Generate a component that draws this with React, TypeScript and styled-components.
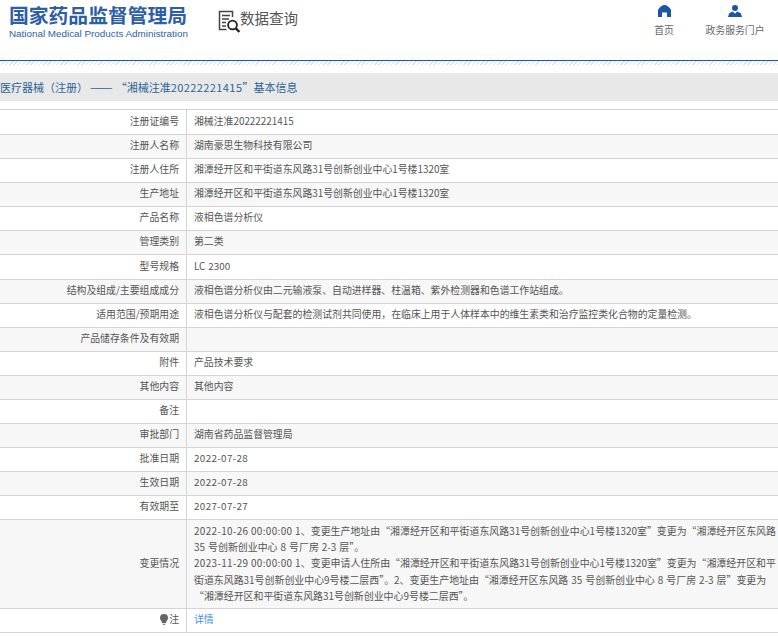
import styled, { createGlobalStyle } from "styled-components"

const GlobalStyle = createGlobalStyle`
  html, body {
    margin: 0;
    padding: 0;
    background: #fff;
    overflow: hidden;
  }
  body {
    font-family: "Noto Sans CJK SC", "Liberation Sans", sans-serif;
    font-size: 9.870px;
    word-spacing: 0.8px;
    color: #555;
  }
`

const rows = [
  { label: "注册证编号", value: "湘械注准20222221415", height: 25 },
  { label: "注册人名称", value: "湖南豪思生物科技有限公司" },
  { label: "注册人住所", value: "湘潭经开区和平街道东风路31号创新创业中心1号楼1320室" },
  { label: "生产地址", value: "湘潭经开区和平街道东风路31号创新创业中心1号楼1320室" },
  { label: "产品名称", value: "液相色谱分析仪" },
  { label: "管理类别", value: "第二类" },
  { label: "型号规格", value: "LC 2300", height: 25 },
  { label: "结构及组成/主要组成成分", value: "液相色谱分析仪由二元输液泵、自动进样器、柱温箱、紫外检测器和色谱工作站组成。" },
  { label: "适用范围/预期用途", value: "液相色谱分析仪与配套的检测试剂共同使用，在临床上用于人体样本中的维生素类和治疗监控类化合物的定量检测。" },
  { label: "产品储存条件及有效期", value: "" },
  { label: "附件", value: "产品技术要求" },
  { label: "其他内容", value: "其他内容" },
  { label: "备注", value: "" },
  { label: "审批部门", value: "湖南省药品监督管理局" },
  { label: "批准日期", value: "2022-07-28", isDate: true },
  { label: "生效日期", value: "2022-07-28", isDate: true },
  { label: "有效期至", value: "2027-07-27", isDate: true },
]

const changes = [
  { stamp: "2022-10-26 00:00:00 1", text: "、变更生产地址由“湘潭经开区和平街道东风路31号创新创业中心1号楼1320室”变更为“湘潭经开区东风路" },
  { stamp: "", text: "35 号创新创业中心 8 号厂房 2-3 层”。" },
  { stamp: "2023-11-29 00:00:00 1", text: "、变更申请人住所由“湘潭经开区和平街道东风路31号创新创业中心1号楼1320室”变更为“湘潭经开区和平" },
  { stamp: "", text: "街道东风路31号创新创业中心9号楼二层西”。2、变更生产地址由“湘潭经开区东风路 35 号创新创业中心 8 号厂房 2-3 层”变更为" },
  { stamp: "", text: "“湘潭经开区和平街道东风路31号创新创业中心9号楼二层西”。" },
]

const App = () => {
  return (
    <>
      <GlobalStyle />
      <Header>
        <Brand>
          <BrandTitle>国家药品监督管理局</BrandTitle>
          <BrandSub>National Medical Products Administration</BrandSub>
        </Brand>
        <Query>
          <svg width="23" height="23" viewBox="0 0 23 23" fill="none" stroke="#444">
            <path d="M14.5 7V1.500H1.500v18h7" strokeWidth="1.500" />
            <path d="M4 5.500h8M4 9h7M4 12.500h4M4 16h4" strokeWidth="1.400" />
            <circle cx="14.500" cy="15" r="4.400" stroke="#222" strokeWidth="1.800" />
            <path d="M17.800 18.400l3.600 3.600" stroke="#222" strokeWidth="2.400" />
          </svg>
          <QueryText>数据查询</QueryText>
        </Query>
        <Nav>
          <NavItem $width={20}>
            <svg width="13" height="12" viewBox="0 0 13 12">
              <path d="M6.500 0C8.500 0 11 2 13 4.800V12H9V7.500H4V12H0V4.800C2 2 4.500 0 6.500 0z" fill="#1a55a8" />
            </svg>
            <NavLabel>首页</NavLabel>
          </NavItem>
          <NavItem $width={60}>
            <svg width="14" height="12" viewBox="0 0 14 12">
              <circle cx="7" cy="3" r="3" fill="#1a55a8" />
              <path d="M0 12L1.200 8.300 4.800 6.600 7 8.800 9.200 6.600 12.800 8.300 14 12z" fill="#1a55a8" />
            </svg>
            <NavLabel>政务服务门户</NavLabel>
          </NavItem>
        </Nav>
      </Header>
      <Hatch />
      <TitleBar>
        医疗器械（注册）<TitleDash>——</TitleDash>“湘械注准<TitleNumber>20222221415</TitleNumber>”基本信息
      </TitleBar>
      <Table>
        {rows.map((row, i) => (
          <Row key={row.label} $odd={i % 2 === 1} $height={row.height ?? 24}>
            <Label>{row.label}</Label>
            <Value>{row.isDate ? <Stamp>{row.value}</Stamp> : row.value}</Value>
          </Row>
        ))}
        <Row $odd $height={89}>
          <Label>变更情况</Label>
          <ChangeValue>
            {changes.map((line) => (
              <div key={line.text}>
                {line.stamp && <Stamp>{line.stamp}</Stamp>}
                {line.text}
              </div>
            ))}
          </ChangeValue>
        </Row>
        <Row $odd={false} $height={24}>
          <Label>
            <svg width="8" height="11" viewBox="0 0 8 11">
              <path d="M4 0a4 4 0 0 1 4 4c0 1.600-1 2.600-1.600 3.600L6 9H2l-.4-1.400C1 6.600 0 5.600 0 4a4 4 0 0 1 4-4z" fill="#666" />
              <path d="M2.500 9.800h3L4.500 11h-1z" fill="#666" />
            </svg>
            注
          </Label>
          <Value>
            <DetailLink>详情</DetailLink>
          </Value>
        </Row>
      </Table>
    </>
  )
}

export default App

const Header = styled.header`
  display: flex;
  height: 60px;
  border-bottom: 1px solid #1f5a96;
  box-sizing: content-box;
`

const Brand = styled.div`
  width: 218px;
  padding: 3px 0 0 9px;
  box-sizing: border-box;
  flex-shrink: 0;
`

const BrandTitle = styled.div`
  font-size: 19.800px;
  font-weight: 700;
  line-height: 24px;
  color: #2d5ea6;
  white-space: nowrap;
`

const BrandSub = styled.div`
  font-family: "Liberation Sans", sans-serif;
  font-size: 9.850px;
  word-spacing: 0;
  line-height: 14px;
  color: #2d5ea6;
  white-space: nowrap;
`

const Query = styled.div`
  display: flex;
  align-items: flex-start;
  padding-top: 10px;
`

const QueryText = styled.span`
  font-size: 14.500px;
  line-height: 20px;
  margin-top: -2px;
  margin-left: -1px;
  color: #555;
`

const Nav = styled.nav`
  display: flex;
  gap: 31px;
  margin-left: auto;
  padding-right: 13px;
`

const NavItem = styled.div<{ $width: number }>`
  display: flex;
  flex-direction: column;
  align-items: center;
  width: ${(props) => props.$width}px;
  padding-top: 5px;
`

const NavLabel = styled.span`
  margin-top: 6px;
  line-height: 14px;
  white-space: nowrap;
  color: #666;
`

const Hatch = styled.div`
  height: 4px;
  background: repeating-linear-gradient(135deg, #d3e3ef 0 1px, #fff 1px 3px);
`

const TitleBar = styled.div`
  margin-top: 8px;
  height: 28px;
  line-height: 28px;
  background: #e8e8e8;
  color: #2a6496;
  font-size: 11px;
  white-space: nowrap;
`

const TitleDash = styled.span`
  font-size: 13.500px;
  line-height: 1;
  margin: 0 3px 0 2px;
`

const TitleNumber = styled.span`
  letter-spacing: 0.42px;
`

const Table = styled.div`
  margin-top: 8px;
  border-top: 1px solid #d0d0d0;
`

const Row = styled.div<{ $odd: boolean; $height: number }>`
  display: grid;
  grid-template-columns: 187px 1fr;
  height: ${(props) => props.$height}px;
  box-sizing: border-box;
  border-bottom: 1px solid #d4d4d4;
  background: ${(props) => (props.$odd ? "#f7f7f7" : "#fff")};
`

const Label = styled.div`
  display: flex;
  align-items: center;
  justify-content: flex-end;
  gap: 1px;
  padding: 0 7px 3px 0;
  border-right: 1px solid #d4d4d4;
  white-space: nowrap;
`

const Value = styled.div`
  display: flex;
  align-items: center;
  padding: 0 0 3px 7px;
  white-space: nowrap;
`

const Stamp = styled.span`
  letter-spacing: 0.35px;
  word-spacing: 0;
`

const ChangeValue = styled.div`
  padding: 3px 0 0 7px;
  font-size: 9.930px;
  line-height: 16.200px;
  white-space: nowrap;
`

const DetailLink = styled.a`
  color: #3d8ee8;
`
